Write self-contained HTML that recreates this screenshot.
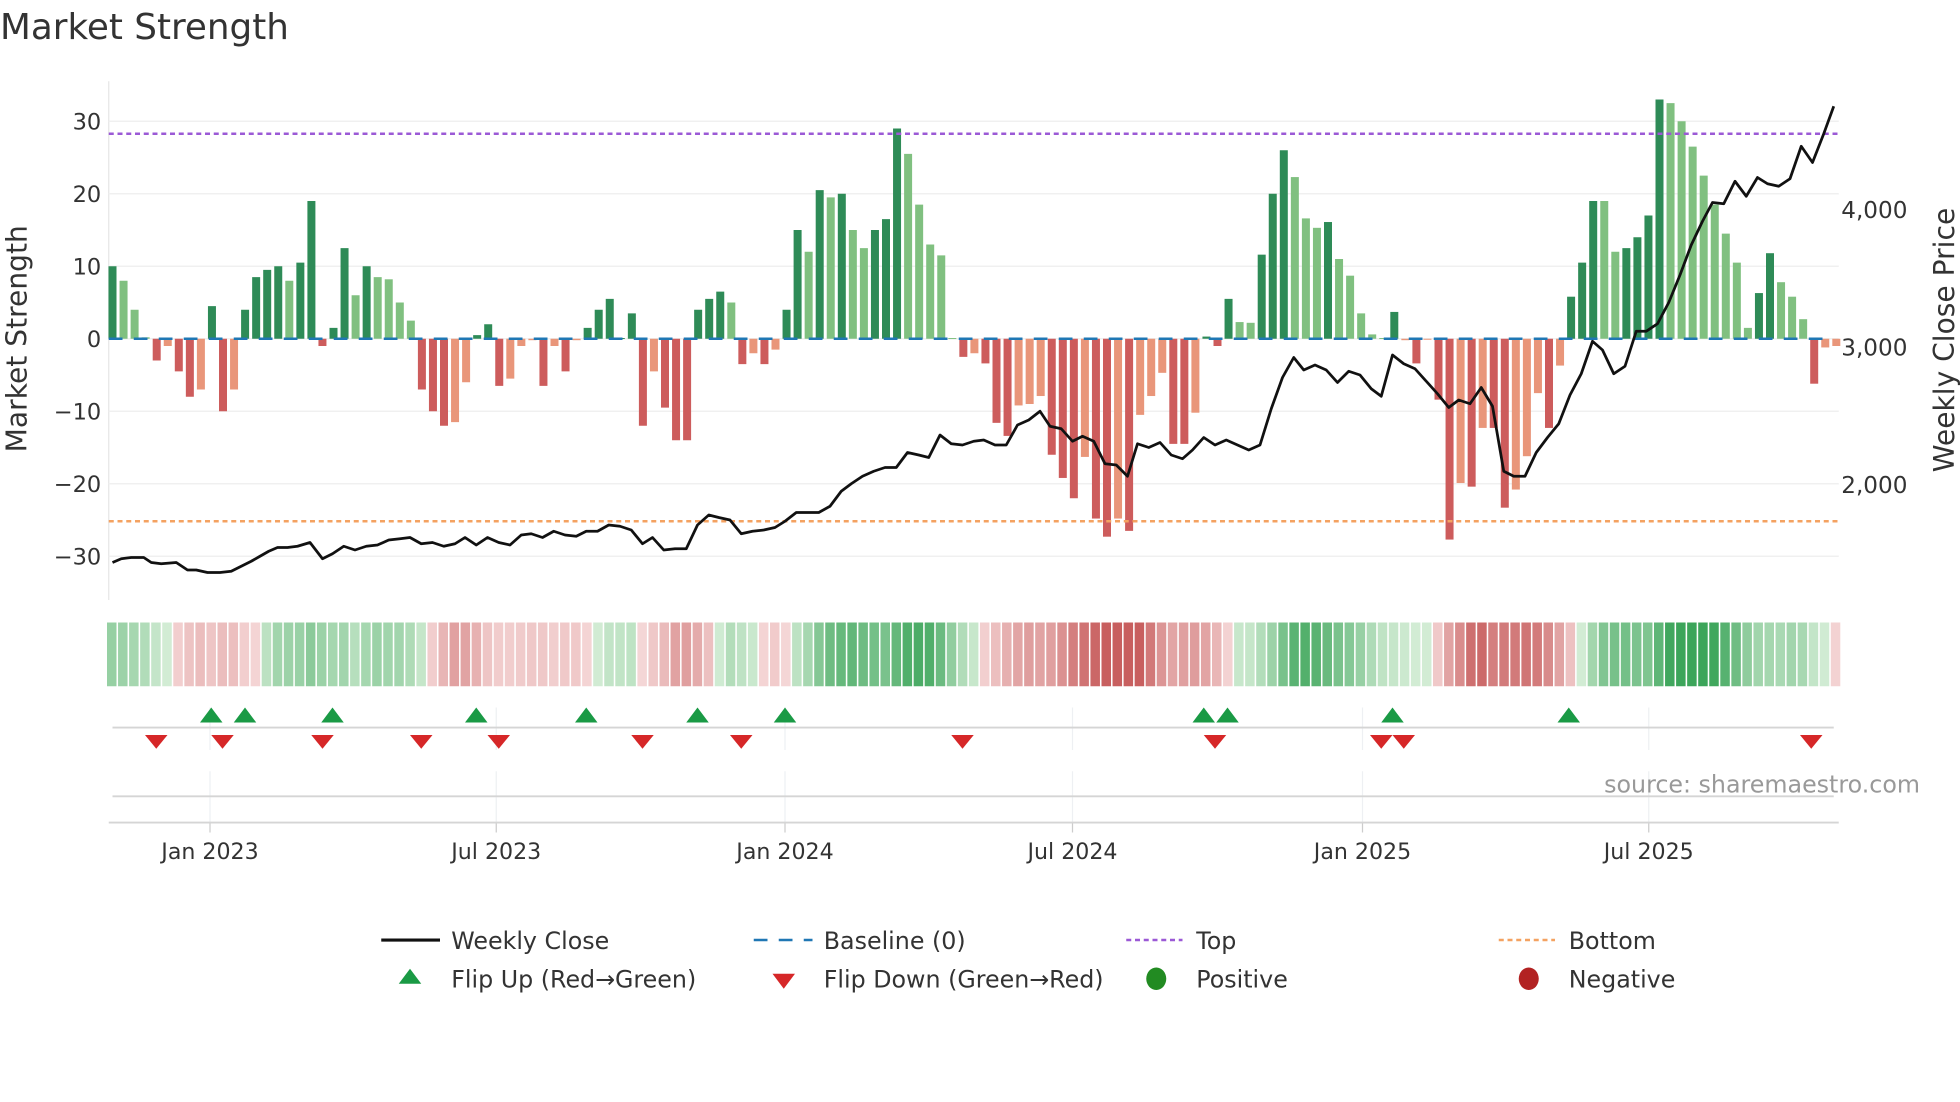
<!DOCTYPE html>
<html><head><meta charset="utf-8"><style>
html,body{margin:0;padding:0;background:#fff;width:1960px;height:1102px;overflow:hidden}
svg{display:block}
text{font-family:"DejaVu Sans","Liberation Sans",sans-serif}
</style></head><body>
<svg id="s" width="1960" height="1102" viewBox="0 0 1568 881.6" xmlns="http://www.w3.org/2000/svg">
<text x="0" y="31" font-size="28.6" fill="#333">Market Strength</text>
<g id="grid"></g>
<g id="bars"></g>
<g id="over"></g>
<text x="1536" y="634" font-size="19" fill="#999" text-anchor="end">source: sharemaestro.com</text>
<text transform="translate(21,271) rotate(-90)" font-size="22.5" fill="#333" text-anchor="middle">Market Strength</text>
<text transform="translate(1563,272) rotate(-90)" font-size="22.5" fill="#333" text-anchor="middle">Weekly Close Price</text>
<g font-size="19" fill="#333">
<line x1="305" y1="752" x2="352" y2="752" stroke="#111" stroke-width="2.5"/>
<text x="361" y="759">Weekly Close</text>
<line x1="603" y1="752" x2="650" y2="752" stroke="#1f77b4" stroke-width="2" stroke-dasharray="11,9"/>
<text x="659" y="759">Baseline (0)</text>
<line x1="901" y1="752" x2="946" y2="752" stroke="#9b59d6" stroke-width="2" stroke-dasharray="4,3"/>
<text x="957" y="759">Top</text>
<line x1="1199" y1="752" x2="1244" y2="752" stroke="#f4a261" stroke-width="2" stroke-dasharray="4,3"/>
<text x="1255" y="759">Bottom</text>
<polygon points="328,775 319,787 337,787" fill="#1a9a45"/>
<text x="361" y="790">Flip Up (Red→Green)</text>
<polygon points="618,779 636,779 627,791" fill="#d62728"/>
<text x="659" y="790">Flip Down (Green→Red)</text>
<ellipse cx="925" cy="783" rx="8" ry="9" fill="#228b22"/>
<text x="957" y="790">Positive</text>
<ellipse cx="1223" cy="783" rx="8" ry="9" fill="#b22222"/>
<text x="1255" y="790">Negative</text>
</g>
</svg>
<script>
var NS="http://www.w3.org/2000/svg";
function el(p,t,a){var e=document.createElementNS(NS,t);for(var k in a)e.setAttribute(k,a[k]);p.appendChild(e);return e;}
var G=document.getElementById('grid'),B=document.getElementById('bars'),O=document.getElementById('over');
var v=[[10,'d'],[8,'l'],[4,'l'],[0.2,'l'],[-3,'r'],[-1,'o'],[-4.5,'r'],[-8,'r'],[-7,'o'],[4.5,'d'],[-10,'r'],[-7,'o'],[4,'d'],[8.5,'d'],[9.5,'d'],[10,'d'],[8,'l'],[10.5,'d'],[19,'d'],[-1,'r'],[1.5,'d'],[12.5,'d'],[6,'l'],[10,'d'],[8.5,'l'],[8.2,'l'],[5,'l'],[2.5,'l'],[-7,'r'],[-10,'r'],[-12,'r'],[-11.5,'o'],[-6,'o'],[0.5,'d'],[2,'d'],[-6.5,'r'],[-5.5,'o'],[-1,'o'],[-0.2,'o'],[-6.5,'r'],[-1,'o'],[-4.5,'r'],[-0.2,'o'],[1.5,'d'],[4,'d'],[5.5,'d'],[0.1,'d'],[3.5,'d'],[-12,'r'],[-4.5,'o'],[-9.5,'r'],[-14,'r'],[-14,'r'],[4,'d'],[5.5,'d'],[6.5,'d'],[5,'l'],[-3.5,'r'],[-2,'o'],[-3.5,'r'],[-1.5,'o'],[4,'d'],[15,'d'],[12,'l'],[20.5,'d'],[19.5,'l'],[20,'d'],[15,'l'],[12.5,'l'],[15,'d'],[16.5,'d'],[29,'d'],[25.5,'l'],[18.5,'l'],[13,'l'],[11.5,'l'],[0.1,'l'],[-2.5,'r'],[-2,'o'],
[-3.4,'r'],[-11.6,'r'],[-13.4,'r'],[-9.2,'o'],[-9,'o'],[-7.9,'o'],[-16,'r'],[-19.2,'r'],[-22,'r'],[-16.3,'o'],[-24.8,'r'],[-27.3,'r'],[-24.8,'o'],[-26.5,'r'],[-10.5,'o'],[-7.9,'o'],[-4.7,'o'],[-14.5,'r'],[-14.5,'r'],[-10.2,'o'],[0.3,'d'],[-1,'r'],[5.5,'d'],[2.3,'l'],[2.2,'l'],[11.6,'d'],[20,'d'],[26,'d'],[22.3,'l'],[16.6,'l'],[15.3,'l'],[16.1,'d'],[11,'l'],[8.7,'l'],[3.5,'l'],[0.6,'l'],[0.1,'l'],[3.7,'d'],[-0.2,'o'],[-3.4,'r'],[-0.1,'o'],[-8.4,'r'],[-27.7,'r'],[-19.9,'o'],[-20.4,'r'],[-12.3,'o'],[-12.3,'r'],[-23.3,'r'],[-20.8,'o'],[-16.2,'o'],[-7.5,'o'],[-12.3,'r'],[-3.7,'o'],[5.8,'d'],[10.5,'d'],[19,'d'],[19,'l'],[12,'l'],[12.5,'d'],[14,'d'],[17,'d'],[33,'d'],[32.5,'l'],[30,'l'],[26.5,'l'],[22.5,'l'],[18.5,'l'],[14.5,'l'],[10.5,'l'],[1.5,'l'],[6.3,'d'],[11.8,'d'],[7.8,'l'],[5.8,'l'],[2.7,'l'],[-6.2,'r'],[-1.2,'o'],[-1,'o']];
var X0=90,DX=8.84,Y0=271,S=5.8;
function yv(x){return Y0-x*S;}
el(G,'line',{x1:87,y1:65,x2:87,y2:480,stroke:'#e6e6e6','stroke-width':1});
[30,20,10,0,-10,-20,-30].forEach(function(t){var y=yv(t);
 el(G,'line',{x1:87,y1:y,x2:1471,y2:y,stroke:'#f0f0f0','stroke-width':1.2});
 var tx=el(G,'text',{x:81,y:y+6.5,'font-size':18,fill:'#333','text-anchor':'end'});tx.textContent=(t<0?'\u2212'+(-t):t);});
[[4000,168],[3000,278],[2000,388]].forEach(function(p){var tx=el(G,'text',{x:1473,y:p[1]+6.5,'font-size':18.5,fill:'#333'});tx.textContent=(p[0]+'').replace(/(\d)(\d{3})$/,'$1,$2');});
var cols={d:'#2e8b57',l:'#80c080',r:'#cd5c5c',o:'#e9967a'};
v.forEach(function(b,i){var x=X0+DX*i-3.2,y=yv(Math.max(b[0],0)),h=Math.abs(b[0])*S;
 el(B,'rect',{x:x,y:y,width:6.4,height:Math.max(h,0.8),fill:cols[b[1]]});});
el(O,'line',{x1:87,y1:Y0,x2:1467,y2:Y0,stroke:'#1f77b4','stroke-width':2,'stroke-dasharray':'11,9'});
el(O,'line',{x1:87,y1:107,x2:1471,y2:107,stroke:'#9b59d6','stroke-width':2,'stroke-dasharray':'4,3'});
el(O,'line',{x1:87,y1:417,x2:1471,y2:417,stroke:'#f4a261','stroke-width':2,'stroke-dasharray':'4,3'});
var pts="90,450 97,447 105,446 115,446 121,450 129,451 141,450 150,456 157,456 166,458 176,458 185,457 193,453 201,449 208,445 215,441 222,438 230,438 238,437 248,434 258,447 266,443 275,437 284,440 293,437 302,436 311,432 320,431 328,430 337,435 346,434 355,437 364,435 372,430 381,436 390,430 399,434 408,436 417,428 425,427 434,430 443,425 452,428 461,429 469,425 478,425 487,420 496,421 505,424 514,435 522,430 531,440 540,439 549,439 558,420 567,412 575,414 584,416 593,427 602,425 611,424 620,422 628,417 637,410 646,410 655,410 664,405 673,393 681,387 690,381 699,377 708,374 717,374 726,362 735,364 743,366 752,348 761,355 770,356 779,353 787,352 796,356 805,356 814,340 823,336 832,329 840,341 849,343 858,353 866,349 875,353 884,371 893,372 902,381 910,355 919,358 928,354 937,364 946,367 954,360 963,350 972,356 981,352 990,356 999,360 1008,356 1017,327 1026,302 1035,286 1043,296 1052,292 1061,296 1070,306 1079,297 1088,300 1097,311 1105,317 1114,284 1123,291 1132,295 1141,305 1150,315 1159,326 1167,320 1176,323 1185,310 1194,325 1203,377 1211,381 1220,381 1229,362 1238,350 1247,339 1256,316 1265,299 1274,273 1282,280 1291,299 1300,293 1309,265 1317,265 1326,259 1335,242 1344,220 1353,196 1362,177 1370,162 1379,163 1388,145 1397,157 1406,142 1414,147 1423,149 1432,143 1441,117 1450,130 1459,107 1467,85";
el(O,'polyline',{points:pts,fill:'none',stroke:'#111','stroke-width':2.2,'stroke-linejoin':'round'});
function mix(a,b,t){return 'rgb('+[0,1,2].map(function(k){return Math.round(a[k]+(b[k]-a[k])*t)}).join(',')+')';}
v.forEach(function(b,i){var s=0,n=0;for(var j=Math.max(0,i-3);j<=i;j++){s+=v[j][0];n++;}var m=s/n;var c;
 if(m>=0)c=mix([210,236,212],[60,165,90],Math.min(m/25,1));else c=mix([246,218,218],[200,95,95],Math.min(-m/22,1));
 el(O,'rect',{x:X0+DX*i-4.4,y:498,width:7.6,height:51,fill:c});});
[168,397,628,858,1090,1319].forEach(function(x){el(G,'line',{x1:x,y1:566,x2:x,y2:600,stroke:'#eef0f3','stroke-width':1});el(G,'line',{x1:x,y1:617,x2:x,y2:658,stroke:'#eef0f3','stroke-width':1});el(G,'line',{x1:x,y1:658,x2:x,y2:666,stroke:'#ccc','stroke-width':1});});
el(G,'line',{x1:90,y1:582,x2:1467,y2:582,stroke:'#d5d5d5','stroke-width':1.5});
el(G,'line',{x1:90,y1:637,x2:1467,y2:637,stroke:'#d5d5d5','stroke-width':1.5});
el(G,'line',{x1:87,y1:658,x2:1471,y2:658,stroke:'#d5d5d5','stroke-width':1.5});
[['Jan 2023',168],['Jul 2023',397],['Jan 2024',628],['Jul 2024',858],['Jan 2025',1090],['Jul 2025',1319]].forEach(function(p){var t=el(G,'text',{x:p[1],y:687,'font-size':17.7,fill:'#333','text-anchor':'middle'});t.textContent=p[0];});
[169,196,266,381,469,558,628,963,982,1114,1255].forEach(function(x){el(O,'polygon',{points:(x)+',566 '+(x-9)+',578 '+(x+9)+',578',fill:'#1a9a45'});});
[125,178,258,337,399,514,593,770,972,1105,1123,1449].forEach(function(x){el(O,'polygon',{points:(x-9)+',588 '+(x+9)+',588 '+x+',599',fill:'#d62728'});});
</script>
</body></html>
